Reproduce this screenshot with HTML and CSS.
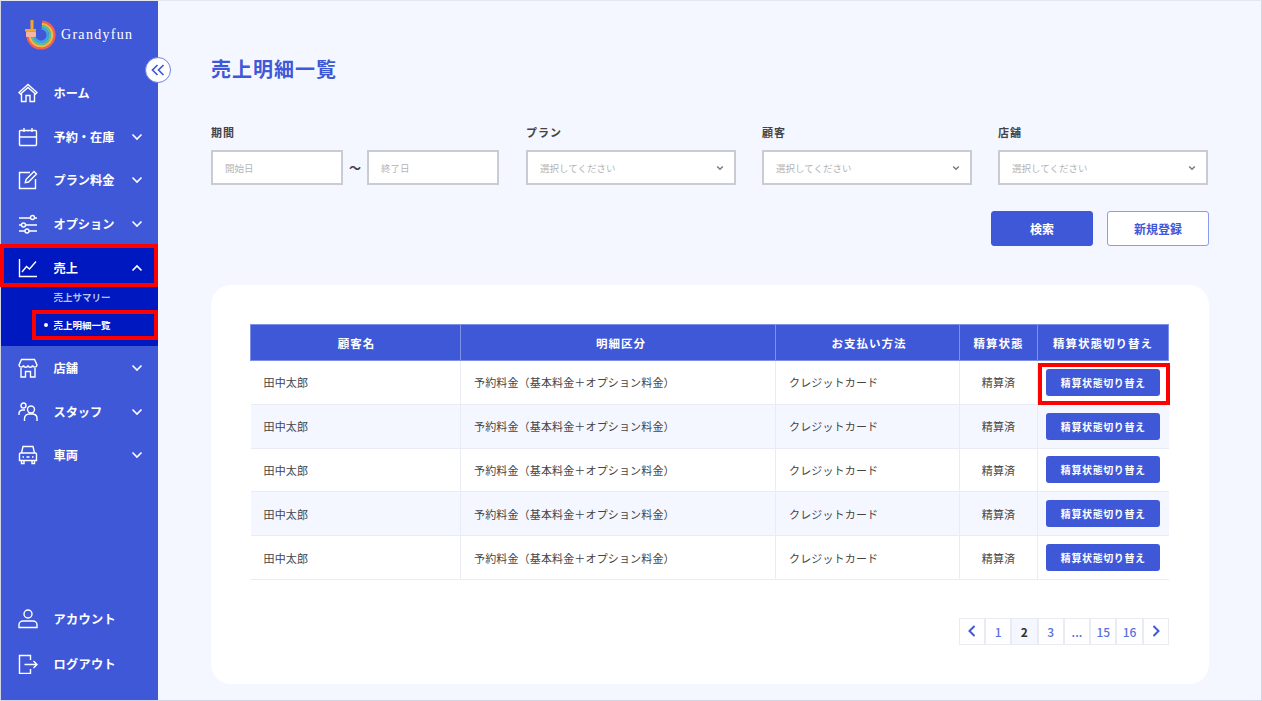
FILE: index.html
```html
<!DOCTYPE html>
<html lang="ja">
<head>
<meta charset="utf-8">
<title>売上明細一覧</title>
<link rel="stylesheet" href="styles.css">
</head>
<body>
<div class="app">
  <aside class="sidebar">
    <div class="logo">
      <svg class="logo-mark" viewBox="0 0 32 32" width="32" height="32" fill="none">
        <g class="logo-ring">
          <circle cx="17" cy="16" r="13.400" pathLength="100" stroke="#f0605a"/>
          <circle cx="17" cy="16" r="11.200" pathLength="100" stroke="#f5b53f"/>
          <circle cx="17" cy="16" r="9" pathLength="100" stroke="#5cc08a"/>
          <circle cx="17" cy="16" r="6.800" pathLength="100" stroke="#3fa3e8"/>
        </g>
        <rect x="6.500" y="1" width="3" height="10" fill="#f3a62c"/>
        <rect x="1" y="10" width="11" height="2.500" fill="#f3a62c"/>
        <rect x="2" y="12.500" width="10" height="5.500" rx="1" fill="#f6b4a8"/>
      </svg>
      <span class="logo-text">Grandyfun</span>
    </div>
    <nav class="nav">
      <a class="nav-row">
        <svg class="nav-icon" viewBox="0 0 20 20"><path d="M1 9.500 10 1.500l9 8-1.500 1.500L10 4.500 2.500 11ZM3.500 10v8.500h4.500v-6h4v6h4.500V10"/></svg>
        <span class="nav-label">ホーム</span>
      </a>
      <a class="nav-row">
        <svg class="nav-icon" viewBox="0 0 20 20"><path d="M2.500 3.500h15a1 1 0 0 1 1 1v13a1 1 0 0 1-1 1h-15a1 1 0 0 1-1-1v-13a1 1 0 0 1 1-1ZM1.500 10h17M6 1v4M14 1v4M10 3v1.500"/></svg>
        <span class="nav-label">予約・在庫</span>
        <svg class="nav-caret" viewBox="0 0 12 8"><path d="M1.500 1.500 6 6l4.500-4.500"/></svg>
      </a>
      <a class="nav-row">
        <svg class="nav-icon" viewBox="0 0 20 20"><path d="M17.500 9v9.500h-16v-16H12M8 9.500l8-8 2.500 2.500-8 8-3.200.7Z"/></svg>
        <span class="nav-label">プラン料金</span>
        <svg class="nav-caret" viewBox="0 0 12 8"><path d="M1.500 1.500 6 6l4.500-4.500"/></svg>
      </a>
      <a class="nav-row">
        <svg class="nav-icon" viewBox="0 0 20 20"><path d="M1 4h11.500M16.500 4H19M1 11h2M7.500 11H19M1 17h6M11 17h8"/><circle cx="14.500" cy="3.500" r="2"/><circle cx="5.500" cy="11" r="2"/><circle cx="9" cy="17" r="2"/></svg>
        <span class="nav-label">オプション</span>
        <svg class="nav-caret" viewBox="0 0 12 8"><path d="M1.500 1.500 6 6l4.500-4.500"/></svg>
      </a>
      <div class="nav-group">
        <a class="nav-row">
          <svg class="nav-icon" viewBox="0 0 20 20"><path d="M1.500 1v17.500H19M4 14l4.500-5.500 3 2.500L18 3.500"/></svg>
          <span class="nav-label">売上</span>
          <svg class="nav-caret" viewBox="0 0 12 8"><path d="M1.500 6.500 6 2l4.500 4.500"/></svg>
        </a>
        <ul class="subnav">
          <li class="subnav-item">売上サマリー</li>
          <li class="subnav-item is-current">売上明細一覧</li>
        </ul>
      </div>
      <a class="nav-row">
        <svg class="nav-icon" viewBox="0 0 20 20"><path d="M3.500 1.500h13L19 7a2.300 2.300 0 0 1-4.500.5 2.300 2.300 0 0 1-4.500 0 2.300 2.300 0 0 1-4.500 0A2.300 2.300 0 0 1 1 7ZM3 10v9h4.500v-5.500h5V19H17v-9"/></svg>
        <span class="nav-label">店舗</span>
        <svg class="nav-caret" viewBox="0 0 12 8"><path d="M1.500 1.500 6 6l4.500-4.500"/></svg>
      </a>
      <a class="nav-row">
        <svg class="nav-icon" viewBox="0 0 20 20"><circle cx="5.500" cy="3.500" r="2.500"/><circle cx="13" cy="7.500" r="3.500"/><path d="M1 13v-1.500A3.500 3.500 0 0 1 4.500 8H7M6.500 19v-2.500A4.500 4.500 0 0 1 11 12h4a4.500 4.500 0 0 1 4 4.500V19"/></svg>
        <span class="nav-label">スタッフ</span>
        <svg class="nav-caret" viewBox="0 0 12 8"><path d="M1.500 1.500 6 6l4.500-4.500"/></svg>
      </a>
      <a class="nav-row">
        <svg class="nav-icon" viewBox="0 0 20 20"><path d="M3.500 8 5 1.500h10L16.500 8M2.500 8h15a1 1 0 0 1 1 1v6.500h-17V9a1 1 0 0 1 1-1ZM3.500 15.500V18.500h2.500v-3M14 15.500V18.500h2.500v-3M4.500 12h1.500M8.500 12h3M14 12h1.500"/></svg>
        <span class="nav-label">車両</span>
        <svg class="nav-caret" viewBox="0 0 12 8"><path d="M1.500 1.500 6 6l4.500-4.500"/></svg>
      </a>
    </nav>
    <div class="side-foot">
      <a class="foot-row">
        <svg class="nav-icon" viewBox="0 0 20 20"><circle cx="10" cy="5" r="4"/><path d="M1 18.500V15.500c0-2 2-3.500 4-3.500h10c2 0 4 1.500 4 3.500v3Z"/></svg>
        <span class="nav-label">アカウント</span>
      </a>
      <a class="foot-row">
        <svg class="nav-icon" viewBox="0 0 20 20"><path d="M12.500 6V1.500h-11v18h11V15M6.500 10.500h12.500M15.500 7l3.500 3.500-3.500 3.500"/></svg>
        <span class="nav-label">ログアウト</span>
      </a>
    </div>
    <button class="collapse" type="button" aria-label="閉じる">
      <svg viewBox="0 0 14 12" width="14" height="12"><path d="M6.500 1 1.500 6l5 5M12.500 1l-5 5 5 5"/></svg>
    </button>
    <div class="mark mark-nav"></div>
    <div class="mark mark-sub"></div>
  </aside>

  <main class="main">
    <h1 class="title">売上明細一覧</h1>
    <form class="filters">
      <div class="field">
        <div class="field-label">期間</div>
        <div class="period">
          <div class="box">開始日</div>
          <span class="tilde">～</span>
          <div class="box">終了日</div>
        </div>
      </div>
      <div class="field">
        <div class="field-label">プラン</div>
        <div class="box box-select">選択してください<svg class="select-caret" viewBox="0 0 10 7"><path d="M1.500 1.500 5 5l3.500-3.500"/></svg></div>
      </div>
      <div class="field">
        <div class="field-label">顧客</div>
        <div class="box box-select">選択してください<svg class="select-caret" viewBox="0 0 10 7"><path d="M1.500 1.500 5 5l3.500-3.500"/></svg></div>
      </div>
      <div class="field">
        <div class="field-label">店舗</div>
        <div class="box box-select">選択してください<svg class="select-caret" viewBox="0 0 10 7"><path d="M1.500 1.500 5 5l3.500-3.500"/></svg></div>
      </div>
    </form>
    <div class="actions">
      <button class="btn btn-solid" type="button">検索</button>
      <button class="btn btn-outline" type="button">新規登録</button>
    </div>
    <section class="card">
      <table class="table">
        <colgroup>
          <col class="col-a"><col class="col-b"><col class="col-c"><col class="col-d"><col class="col-e">
        </colgroup>
        <thead>
          <tr><th>顧客名</th><th>明細区分</th><th>お支払い方法</th><th>精算状態</th><th>精算状態切り替え</th></tr>
        </thead>
        <tbody>
          <tr><td>田中太郎</td><td>予約料金（基本料金＋オプション料金）</td><td>クレジットカード</td><td class="center">精算済</td><td class="center cell-action"><button class="row-btn" type="button">精算状態切り替え</button><div class="mark mark-btn"></div></td></tr>
          <tr><td>田中太郎</td><td>予約料金（基本料金＋オプション料金）</td><td>クレジットカード</td><td class="center">精算済</td><td class="center"><button class="row-btn" type="button">精算状態切り替え</button></td></tr>
          <tr><td>田中太郎</td><td>予約料金（基本料金＋オプション料金）</td><td>クレジットカード</td><td class="center">精算済</td><td class="center"><button class="row-btn" type="button">精算状態切り替え</button></td></tr>
          <tr><td>田中太郎</td><td>予約料金（基本料金＋オプション料金）</td><td>クレジットカード</td><td class="center">精算済</td><td class="center"><button class="row-btn" type="button">精算状態切り替え</button></td></tr>
          <tr><td>田中太郎</td><td>予約料金（基本料金＋オプション料金）</td><td>クレジットカード</td><td class="center">精算済</td><td class="center"><button class="row-btn" type="button">精算状態切り替え</button></td></tr>
        </tbody>
      </table>
      <div class="pager">
        <a class="page"><svg class="page-caret" viewBox="0 0 8 12"><path d="M6.500 1 1.500 6l5 5"/></svg></a>
        <a class="page">1</a>
        <a class="page is-current">2</a>
        <a class="page">3</a>
        <a class="page">...</a>
        <a class="page">15</a>
        <a class="page">16</a>
        <a class="page"><svg class="page-caret" viewBox="0 0 8 12"><path d="M1.500 1l5 5-5 5"/></svg></a>
      </div>
    </section>
  </main>
</div>
</body>
</html>
```

FILE: styles.css
```css
* { box-sizing: border-box; }
html, body { margin: 0; padding: 0; }
body {
  width: 1262px;
  height: 701px;
  overflow: hidden;
  font-family: "Noto Sans CJK JP", "Noto Sans", sans-serif;
  color: #444;
}
.app {
  display: flex;
  width: 1262px;
  height: 701px;
  background: #f4f7ff;
  border: 1px solid #d3d6e2;
  border-top-color: #e4e7f2;
}

/* sidebar */
.sidebar {
  position: relative;
  display: flex;
  flex-direction: column;
  flex: 0 0 157px;
  background: #3f58d8;
  color: #fff;
}
.logo {
  display: flex;
  align-items: center;
  height: 70px;
  padding: 0 0 3px 23px;
  gap: 5px;
}
.logo-mark { flex: none; }
.logo-ring circle {
  stroke-width: 2.4;
  stroke-dasharray: 78 22;
  transform: rotate(-85deg);
  transform-origin: 17px 16px;
}
.logo-text {
  font-family: "Liberation Serif", serif;
  font-size: 14px;
  letter-spacing: 1.3px;
  color: #fff;
}
.nav { display: flex; flex-direction: column; }
.nav-row {
  display: flex;
  align-items: center;
  height: 43.75px;
  padding: 0 15px 0 17px;
}
.foot-row {
  display: flex;
  align-items: center;
  height: 45px;
  padding: 0 15px 0 17px;
}
.nav-icon {
  flex: none;
  width: 20px;
  height: 20px;
  fill: none;
  stroke: #fff;
  stroke-width: 1.4;
}
.nav-label {
  flex: 1;
  margin-left: 15.500px;
  font-size: 12.200px;
  font-weight: 700;
  line-height: 16px;
}
.foot-row .nav-label { letter-spacing: .3px; }
.nav-caret {
  flex: none;
  width: 12px;
  height: 8px;
  fill: none;
  stroke: #fff;
  stroke-width: 1.6;
}
.nav-group {
  background: #0018bf;
  height: 100px;
}
.nav-group .nav-row { height: 44px; }
.subnav {
  list-style: none;
  margin: -7px 0 0;
  padding: 0;
}
.subnav-item {
  position: relative;
  height: 28px;
  padding-left: 52.500px;
  font-size: 9.500px;
  font-weight: 700;
  line-height: 28px;
  color: #b9c2ee;
}
.subnav-item.is-current { color: #fff; }
.subnav-item.is-current::before {
  content: "";
  position: absolute;
  left: 42.500px;
  top: 12px;
  width: 4px;
  height: 4px;
  border-radius: 50%;
  background: #fff;
}
.side-foot { margin-top: auto; padding-bottom: 14px; }
.collapse {
  position: absolute;
  left: 144px;
  top: 56px;
  display: flex;
  align-items: center;
  justify-content: center;
  width: 26px;
  height: 26px;
  padding: 0;
  border: 1px solid #6f83e0;
  border-radius: 50%;
  background: #fff;
}
.collapse svg { fill: none; stroke: #3f58d8; stroke-width: 1.7; }
.mark {
  position: absolute;
  border: 4px solid #f00;
  pointer-events: none;
}
.mark-nav { left: -1px; top: 243px; width: 158px; height: 43px; }
.mark-sub { left: 31px; top: 309px; width: 126px; height: 30px; }

/* main */
.main {
  flex: 1;
  padding: 0 52px 0 53px;
  min-width: 0;
}
.title {
  margin: 53px 0 0;
  font-size: 20px;
  font-weight: 700;
  line-height: 30px;
  letter-spacing: 1px;
  color: #3f58d8;
}
.filters {
  display: grid;
  grid-template-columns: 289px 210px 210px 210px;
  column-gap: 26px;
  margin-top: 40px;
}
.field-label {
  margin-bottom: 10px;
  font-size: 11px;
  font-weight: 700;
  line-height: 16px;
  letter-spacing: 1px;
  color: #444;
}
.period {
  display: grid;
  grid-template-columns: 132px 24px 132px;
}
.tilde {
  font-size: 12px;
  font-weight: 700;
  line-height: 36px;
  text-align: center;
  color: #444;
}
.box {
  position: relative;
  height: 35px;
  padding-left: 12px;
  background: #fff;
  border: 2px solid #c9ccd2;
  font-size: 9.500px;
  line-height: 32px;
  color: #b4b4b4;
}
.select-caret {
  position: absolute;
  right: 10px;
  top: 13px;
  width: 8px;
  height: 6px;
  fill: none;
  stroke: #7a7a7a;
  stroke-width: 1.8;
}
.actions {
  display: flex;
  justify-content: flex-end;
  gap: 14px;
  margin-top: 25px;
}
.btn {
  width: 102px;
  height: 35px;
  padding: 0;
  border-radius: 3px;
  font-family: inherit;
  font-size: 12px;
  font-weight: 700;
}
.btn-solid { background: #3f58d8; border: 1px solid #3f58d8; color: #fff; }
.btn-outline { background: #fff; border: 1.500px solid #8a9ced; color: #3f58d8; }

/* card & table */
.card {
  height: 399px;
  margin-top: 39px;
  padding: 39px 40px 0 39px;
  background: #fff;
  border-radius: 20px;
}
.table {
  width: 918px;
  table-layout: fixed;
  border-collapse: collapse;
  font-size: 11px;
}
.col-a { width: 210px; }
.col-b { width: 315px; }
.col-c { width: 184px; }
.col-d { width: 78px; }
.col-e { width: 131px; }
.table th {
  height: 36px;
  padding: 0;
  background: #3f58d8;
  border: 1px solid #7f91e6;
  font-size: 11.500px;
  font-weight: 700;
  letter-spacing: 1px;
  color: #fff;
  text-align: center;
}
.table th:nth-child(1) { padding-left: 2px; }
.table th:nth-child(2) { padding-left: 6px; }
.table th:nth-child(3) { padding-left: 3px; }
.table td {
  height: 43.800px;
  padding: 0 0 0 13px;
  border: 1px solid #eaecf3;
  border-top: 0;
  letter-spacing: .15px;
  color: #444;
}
.table tr td:first-child { border-left: 0; }
.table tr td:last-child { border-right: 0; }
.table tbody tr:nth-child(even) td { background: #f4f7ff; }
.table td.center { padding: 0; text-align: center; }
.cell-action { position: relative; }
.row-btn {
  display: block;
  width: 114px;
  height: 27px;
  margin: 0 auto;
  padding: 0;
  background: #3f58d8;
  border: 0;
  border-radius: 3px;
  font-family: inherit;
  font-size: 10px;
  font-weight: 700;
  letter-spacing: .6px;
  color: #fff;
}
.mark-btn { left: 0; top: 2px; width: 132px; height: 42px; }
.pager {
  display: flex;
  justify-content: flex-end;
  margin-top: 38px;
}
.page {
  display: flex;
  align-items: center;
  justify-content: center;
  width: 26.300px;
  height: 27px;
  background: #fff;
  border: 1px solid #e9ebf1;
  font-size: 12px;
  font-weight: 500;
  color: #5a70e0;
}
.page.is-current { background: #f4f7ff; color: #333; font-weight: 700; }
.page-caret {
  width: 8px;
  height: 12px;
  fill: none;
  stroke: #3f58d8;
  stroke-width: 2;
}
```
